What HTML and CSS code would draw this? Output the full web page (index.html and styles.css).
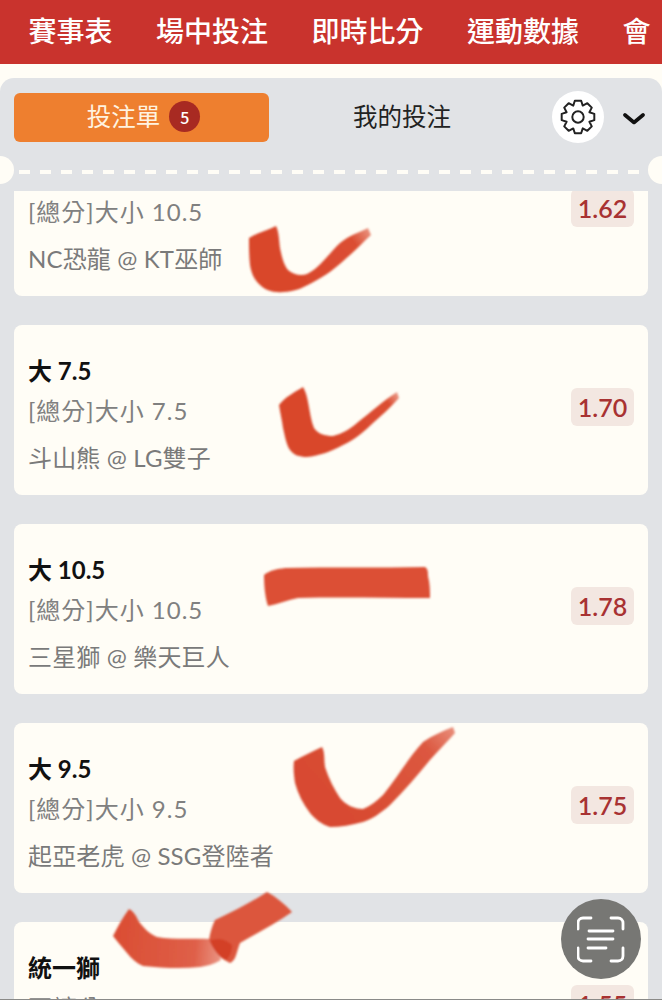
FILE: index.html
```html
<!DOCTYPE html>
<html lang="zh-Hant">
<head>
    <meta charset="UTF-8">
    <meta name="viewport" content="width=device-width, initial-scale=1.0">
    <title>投注單</title>
    <link rel="stylesheet" href="styles.css">
</head>
<body>
    <nav class="top-nav">
        <a>賽事表</a>
        <a>場中投注</a>
        <a>即時比分</a>
        <a>運動數據</a>
        <a>會</a>
    </nav>

    <main class="panel">
        <div class="tabs">
            <button class="tab active"><span>投注單</span><span class="badge">5</span></button>
            <button class="tab">我的投注</button>
            <span class="gear-btn">
                <svg viewBox="0 0 24 24" width="38" height="38" fill="none" stroke="#222" stroke-width="1.25" stroke-linejoin="round">
                    <path d="M14 1.7L15 4.8L17.9 3.3L20.7 6.1L19.2 9L22.3 10V14L19.2 15L20.7 17.9L17.9 20.7L15 19.2L14 22.3H10L9 19.2L6.1 20.7L3.3 17.9L4.8 15L1.7 14V10L4.8 9L3.3 6.1L6.1 3.3L9 4.8L10 1.7Z"/>
                    <circle cx="12" cy="12" r="3.6"/>
                </svg>
            </span>
            <svg class="chevron" viewBox="0 0 22 12" width="22" height="12" fill="none" stroke="#111" stroke-width="3.6" stroke-linecap="round" stroke-linejoin="round">
                <path d="M2 2L11 9.5L20 2"/>
            </svg>
        </div>

        <div class="divider">
            <span class="dashes"></span>
            <span class="notch left"></span>
            <span class="notch right"></span>
        </div>

        <div class="bets">
            <section class="bet first">
                <div class="bet-info">
                    <div class="bet-title">大 10.5</div>
                    <div class="bet-market">[總分]大小 10.5</div>
                    <div class="bet-teams">NC恐龍 @ KT巫師</div>
                </div>
                <span class="odds">1.62</span>
            </section>
            <section class="bet">
                <div class="bet-info">
                    <div class="bet-title">大 7.5</div>
                    <div class="bet-market">[總分]大小 7.5</div>
                    <div class="bet-teams">斗山熊 @ LG雙子</div>
                </div>
                <span class="odds">1.70</span>
            </section>
            <section class="bet">
                <div class="bet-info">
                    <div class="bet-title">大 10.5</div>
                    <div class="bet-market">[總分]大小 10.5</div>
                    <div class="bet-teams">三星獅 @ 樂天巨人</div>
                </div>
                <span class="odds">1.78</span>
            </section>
            <section class="bet">
                <div class="bet-info">
                    <div class="bet-title">大 9.5</div>
                    <div class="bet-market">[總分]大小 9.5</div>
                    <div class="bet-teams">起亞老虎 @ SSG登陸者</div>
                </div>
                <span class="odds">1.75</span>
            </section>
            <section class="bet">
                <div class="bet-info">
                    <div class="bet-title">統一獅</div>
                    <div class="bet-market">不讓分</div>
                    <div class="bet-teams">&nbsp;</div>
                </div>
                <span class="odds">1.55</span>
            </section>
        </div>
    </main>

    <!-- hand drawn marks on top of the page -->
    <svg class="marks" viewBox="0 0 662 1000" width="662" height="1000">
        <defs>
            <filter id="soft" x="-5%" y="-5%" width="110%" height="110%"><feGaussianBlur stdDeviation="0.9"/></filter>
            <linearGradient id="fade1" gradientUnits="userSpaceOnUse" x1="300" y1="280" x2="371" y2="228">
                <stop offset="0" stop-color="#d9472c"/>
                <stop offset="0.75" stop-color="#db4e33"/>
                <stop offset="1" stop-color="#eb9b88"/>
            </linearGradient>
            <linearGradient id="fade2" gradientUnits="userSpaceOnUse" x1="340" y1="440" x2="399" y2="392">
                <stop offset="0" stop-color="#d9472c"/>
                <stop offset="0.8" stop-color="#db4e33"/>
                <stop offset="1" stop-color="#eda594"/>
            </linearGradient>
            <linearGradient id="fade4" gradientUnits="userSpaceOnUse" x1="350" y1="820" x2="455" y2="727">
                <stop offset="0" stop-color="#d84a30"/>
                <stop offset="0.75" stop-color="#dc5840"/>
                <stop offset="1" stop-color="#e9907d"/>
            </linearGradient>
            <linearGradient id="fade5" gradientUnits="userSpaceOnUse" x1="113" y1="940" x2="222" y2="950">
                <stop offset="0" stop-color="#da4d33"/>
                <stop offset="0.75" stop-color="#df5f48"/>
                <stop offset="1" stop-color="#ea9584"/>
            </linearGradient>
        </defs>
        <g filter="url(#soft)">
            <path fill="url(#fade1)" d="M249 238C257 233 268 230 276 226C279 232 279 240 280 248C282 258 284 265 288 270C294 275 301 276 307 274C320 268 330 252 340 243C350 235 360 232 368 228L371 235C364 241 358 248 350 255C340 264 330 273 317 280C305 287 295 292 283 292C273 293 265 290 260 285C254 280 251 272 250 265C249 256 249 246 249 238Z"/>
            <path fill="url(#fade2)" d="M279 405C285 397 295 392 303 387C306 392 307 397 308 402C310 412 311 421 314 428C318 434 325 436 333 436C342 434 350 429 357 423C371 412 384 400 397 392L399 398C391 407 382 415 373 423C364 432 354 440 343 445C332 451 319 456 307 457C299 457 294 455 290 450C286 444 285 436 283 428C282 420 280 412 279 405Z"/>
            <path fill="#dc4f35" d="M264 575C270 570 278 569 285 568C330 567 380 568 425 567C428 569 428 572 428 576C430 584 430 591 430 598C385 598 340 597 298 598C288 600 278 604 268 606C265 597 264 585 264 575Z"/>
            <path fill="url(#fade4)" d="M294 761C303 756 313 751 322 747C325 752 324 760 325 767C329 779 334 789 340 798C346 805 354 809 363 809C370 806 377 801 383 795C397 778 409 757 423 742C433 735 443 731 453 727L455 733C447 742 438 751 430 760C417 776 404 791 390 805C381 813 372 819 363 822C352 825 340 827 330 827C321 824 315 819 310 813C303 804 298 794 295 783C294 776 293 768 294 761Z"/>
            <path fill="url(#fade5)" d="M113 936C118 926 123 917 129 909C133 911 136 915 138 920C143 928 150 934 157 937C175 940 193 938 210 939C215 946 218 953 221 960C214 964 207 966 200 967C181 969 162 968 143 966C136 963 131 958 127 953C122 947 117 941 113 936Z"/>
            <path fill="#dc563d" d="M209 940C210 933 212 926 215 920C232 912 250 903 267 892C276 897 285 904 292 912C276 923 258 933 240 943C238 948 237 953 235 958C233 961 232 962 230 963C226 961 223 959 220 957C216 952 212 946 209 940Z"/>
            <path fill="#d33f26" d="M210 941C216 938 224 938 232 945C232 952 229 958 226 960C219 957 213 949 210 941Z"/>
        </g>
    </svg>

    <button class="scan-btn">
        <svg viewBox="0 0 48 48" width="48" height="48" fill="none" stroke="#fff" stroke-width="2.8" stroke-linecap="round">
            <path d="M14 3H6C3 3 1 5 1 8V14M34 3H41C44 3 46 5 46 8V14M1 33V41C1 44 3 46 6 46H14M46 33V41C46 44 44 46 41 46H34"/>
            <path d="M12 16H36M11 24H36M11 33H29"/>
        </svg>
    </button>
    <div class="bottom-rule"></div>
</body>
</html>
```

FILE: styles.css
```css
html, body {
    margin: 0;
    height: 1000px;
    overflow: hidden;
}
body {
    position: relative;
    background-color: #fffdf6;
    font-family: "Lato", "Noto Sans CJK TC", sans-serif;
    color: #222;
}
button {
    font-family: inherit;
    border: none;
    background: none;
    padding: 0;
}

/* top red bar */
.top-nav {
    display: flex;
    gap: 43.5px;
    box-sizing: border-box;
    height: 64px;
    padding: 0 0 5px 28.5px;
    align-items: center;
    background-color: #c9332d;
    color: #fff;
    font-family: "Noto Sans CJK TC", sans-serif;
    font-size: 28px;
    font-weight: 500;
    line-height: 40px;
    white-space: nowrap;
}

.panel {
    margin-top: 14px;
    height: 922px;
    background-color: #e1e3e6;
    border-radius: 14px 14px 0 0;
    display: flex;
    flex-direction: column;
    overflow: hidden;
}

.tabs {
    display: flex;
    align-items: center;
    height: 52px;
    margin-top: 13px;
    padding: 0 17px 0 14px;
}
.tab {
    box-sizing: border-box;
    font-size: 24.5px;
    height: 49px;
    padding-bottom: 4px;
    color: #222;
    font-family: "Noto Sans CJK TC", sans-serif;
}
.tab:nth-child(2) {
    width: 266px;
}
.tab.active {
    width: 255px;
    display: flex;
    align-items: center;
    justify-content: center;
    gap: 9px;
    padding: 0 0 1px 4px;
    background-color: #ee7f2f;
    color: #fff3e0;
    border-radius: 6px;
}
.tab.active span:first-child {
    margin-bottom: 2px;
}
.badge {
    width: 31px;
    height: 31px;
    border-radius: 50%;
    background-color: #a82a22;
    color: #fff;
    font-family: "Noto Sans CJK TC", sans-serif;
    font-size: 16px;
    font-weight: 500;
    display: flex;
    align-items: center;
    justify-content: center;
}
.gear-btn {
    width: 52px;
    height: 52px;
    margin-left: 17px;
    border-radius: 50%;
    background-color: #fff;
    display: flex;
    align-items: center;
    justify-content: center;
}
.chevron {
    margin-left: 19px;
    margin-top: 3px;
}

.divider {
    position: relative;
    height: 48px;
    flex-shrink: 0;
}
.dashes {
    display: block;
    height: 4px;
    margin: 27px 14px 0 19px;
    background-image: repeating-linear-gradient(to right, #fffdf6 0, #fffdf6 11px, transparent 11px, transparent 21px);
}
.notch {
    position: absolute;
    top: 13px;
    width: 28px;
    height: 28px;
    border-radius: 50%;
    background-color: #fffdf6;
}
.notch.left {
    left: -14px;
}
.notch.right {
    right: -14px;
}

.bets {
    flex: 1;
    overflow: hidden;
    padding: 0 14px;
}
.bet {
    display: flex;
    align-items: center;
    justify-content: space-between;
    box-sizing: border-box;
    height: 170px;
    margin-bottom: 29px;
    padding: 0 14px;
    background-color: #fffdf6;
    border-radius: 8px;
}
.bet.first {
    margin-top: -65px;
}
.bet-info {
    margin-top: 16px;
}
.bet-title {
    font-size: 24px;
    font-weight: 700;
    line-height: 34px;
    color: #111;
}
.bet-market {
    font-size: 24px;
    line-height: 46px;
    letter-spacing: 1px;
    color: #808080;
}
.bet-teams {
    font-size: 24px;
    line-height: 48px;
    letter-spacing: 0.15px;
    color: #7a7a7a;
}
.odds {
    width: 63px;
    height: 38px;
    margin-bottom: 7px;
    line-height: 38px;
    text-align: center;
    font-size: 25px;
    font-weight: 600;
    color: #a83232;
    background-color: #f3e7e1;
    border-radius: 6px;
}

.marks {
    position: absolute;
    left: 0;
    top: 0;
    pointer-events: none;
}
.scan-btn {
    position: absolute;
    left: 561px;
    top: 899px;
    width: 80px;
    height: 80px;
    border-radius: 50%;
    background-color: #777774;
    display: flex;
    align-items: center;
    justify-content: center;
}
.bottom-rule {
    position: absolute;
    left: 0;
    right: 0;
    bottom: 0;
    height: 1px;
    background-color: #8a8a88;
}
```
